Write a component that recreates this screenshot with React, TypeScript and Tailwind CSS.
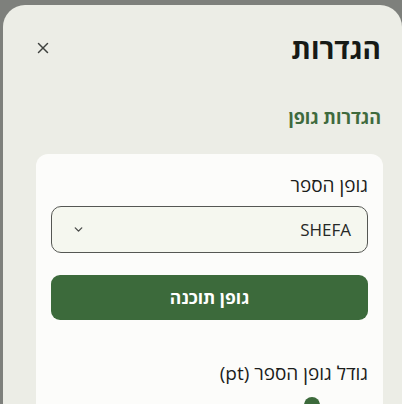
import { X, ChevronDown } from "lucide-react";

const font = { fontFamily: '"Open Sans", "Noto Sans", "DejaVu Sans", sans-serif' };

export default function App() {
  return (
    <div className="h-[404px] w-[402px] overflow-hidden bg-[#7e807c] pt-[5px] pl-[3px]" style={font}>
      <div dir="rtl" className="h-[420px] rounded-t-[22px] bg-[#ecede6] pr-[19px] pl-[33px]">
        {/* Header */}
        <div className="flex items-center justify-between pt-[26px] pr-[2px]">
          <h1 className="text-[28px] font-bold leading-[34px] text-[#161a16]">הגדרות</h1>
          <button className="ml-[-2px] text-[#3f423f]">
            <X className="h-[18px] w-[18px]" strokeWidth={2} />
          </button>
        </div>

        {/* Section title */}
        <h2 className="mt-[39px] pr-[2px] text-[18px] font-bold leading-[26px] text-[#3e6a3d]">הגדרות גופן</h2>

        {/* Card */}
        <div className="mt-[24px] rounded-[12px] bg-[#fcfcfa] px-[15px] pt-[17px] pb-6">
          <label className="block text-[19px] leading-[28px] text-[#1b1d1b]">גופן הספר</label>
          <div className="mt-[7px] flex h-[47px] items-center justify-between rounded-[10px] border border-[#555753] bg-[#f5f7ef] pr-[16px] pl-[20px]">
            <span className="text-[17px] text-[#262826]">SHEFA</span>
            <ChevronDown className="h-[13px] w-[13px] text-[#4a4c4a]" strokeWidth={2.5} />
          </div>
          <button className="mt-[22px] flex h-[45px] w-full items-center justify-center rounded-[9px] bg-[#3c6a3b] text-[17.5px] font-bold text-white">
            גופן תוכנה
          </button>
          <label className="mt-[39px] block text-[19px] leading-[28px] text-[#1b1d1b]">גודל גופן הספר (pt)</label>
          <div className="relative mt-[9px] h-[20px]">
            <span className="absolute top-[1px] right-[48px] h-[16px] w-[16px] rounded-full bg-[#3c6a3b]" />
          </div>
        </div>
      </div>
    </div>
  );
}
